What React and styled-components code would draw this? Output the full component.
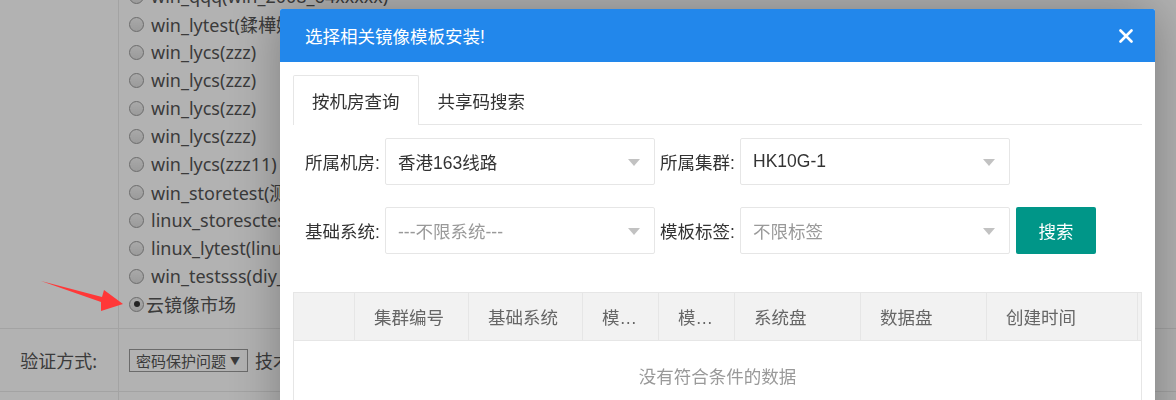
import React from 'react';
import styled, { createGlobalStyle } from 'styled-components';

const GlobalStyle = createGlobalStyle`
  html, body {
    margin: 0;
    padding: 0;
    background: #fff;
    overflow: hidden;
  }
  body {
    font-family: "Noto Sans", "Noto Sans CJK SC", sans-serif;
    color: #555;
  }
`;

/* ---------- page behind the layer ---------- */

const Page = styled.div`
  margin-top: -18px;
`;

const FormRow = styled.div`
  display: flex;
  border-bottom: 1px solid #eaeaea;
  min-height: ${(p) => p.minHeight || 0}px;
`;

const KeyCell = styled.div`
  width: 119px;
  flex-shrink: 0;
  border-right: 1px solid #eaeaea;
  display: flex;
  align-items: center;
  justify-content: flex-end;
  padding-right: 21px;
  box-sizing: border-box;
  font-size: 18px;
  color: #555;
`;

const ValueCell = styled.div`
  flex: 1;
  display: flex;
  align-items: ${(p) => (p.center ? 'center' : 'flex-start')};
  padding-left: 10px;
  white-space: nowrap;
`;

const RadioList = styled.div`
  display: flex;
  flex-direction: column;
  padding-bottom: 10px;
`;

const RadioItem = styled.label`
  display: flex;
  align-items: center;
  height: 28px;
  font-size: 18px;
  color: #555;
  white-space: nowrap;
`;

const RadioDot = styled.span`
  width: 15px;
  height: 15px;
  box-sizing: border-box;
  border-radius: 50%;
  border: 1px solid #9a9a9a;
  background: linear-gradient(#f2f2f2, #dedede);
  margin-right: ${(p) => (p.tight ? 2 : 7)}px;
  display: flex;
  align-items: center;
  justify-content: center;
  flex-shrink: 0;

  &::after {
    content: '';
    width: 6px;
    height: 6px;
    border-radius: 50%;
    background: #333;
    display: ${(p) => (p.checked ? 'block' : 'none')};
  }
`;

const NativeSelect = styled.div`
  width: 119px;
  height: 23px;
  box-sizing: border-box;
  border: 1px solid #9a9a9a;
  background: #fff;
  display: flex;
  align-items: center;
  justify-content: space-between;
  padding: 0 7px 0 6px;
  font-family: "Noto Sans CJK SC", sans-serif;
  font-size: 15px;
  color: #555;
  margin-right: 7px;
`;

const Caret = styled.span`
  font-size: 10px;
  margin-left: 4px;
`;

const Trailing = styled.span`
  font-size: 18px;
  color: #555;
`;

/* ---------- shade and layer ---------- */

const Shade = styled.div`
  position: fixed;
  inset: 0;
  background: rgba(0, 0, 0, 0.3);
  z-index: 10;
`;

const Annotation = styled.svg`
  position: fixed;
  left: 0;
  top: 0;
  z-index: 30;
  pointer-events: none;
`;

const Layer = styled.div`
  position: fixed;
  left: 280px;
  top: 9px;
  width: 875px;
  height: 520px;
  background: #fff;
  border-radius: 2px;
  box-shadow: 1px 1px 50px rgba(0, 0, 0, 0.3);
  z-index: 20;
  font-family: "Liberation Sans", "Noto Sans CJK SC", sans-serif;
  font-size: 17.5px;
  color: #333;
`;

const TitleBar = styled.div`
  height: 53px;
  background: #2287eb;
  border-radius: 2px 2px 0 0;
  display: flex;
  align-items: center;
  justify-content: space-between;
  padding: 0 22px 0 25px;
  color: #fff;
  font-size: 17.5px;
`;

const CloseButton = styled.button`
  border: 0;
  padding: 0;
  background: none;
  width: 14px;
  height: 14px;
  display: flex;
  cursor: pointer;
`;

const Content = styled.div`
  padding: 13px;
`;

const TabBar = styled.div`
  display: flex;
  height: 49px;
  border-bottom: 1px solid #e6e6e6;
`;

const Tab = styled.div`
  height: ${(p) => (p.active ? 50 : 49)}px;
  box-sizing: border-box;
  padding: 0 18px;
  display: flex;
  align-items: center;
  background: #fff;
  border: 1px solid ${(p) => (p.active ? '#e6e6e6' : 'transparent')};
  border-bottom: 0;
  border-radius: 2px 2px 0 0;
  color: #333;
`;

const Form = styled.div`
  padding: 13px 0 0 12px;
  display: flex;
  flex-direction: column;
  gap: 22px;
`;

const Line = styled.div`
  display: flex;
  align-items: center;
  gap: 5px;
`;

const FieldLabel = styled.span`
  width: 75px;
  white-space: nowrap;
  color: #333;
`;

const SelectBox = styled.div`
  width: 270px;
  height: 47px;
  box-sizing: border-box;
  border: 1px solid #e6e6e6;
  border-radius: 2px;
  display: flex;
  align-items: center;
  justify-content: space-between;
  padding: 0 14px 0 12px;
  color: ${(p) => (p.placeholder ? '#999' : '#333')};
  background: #fff;

  &::after {
    content: '';
    border-style: solid;
    border-width: 7px 6.5px 0;
    border-color: #c2c2c2 transparent transparent;
    margin-top: 2px;
  }
`;

const SearchButton = styled.button`
  width: 80px;
  height: 47px;
  margin-left: 1px;
  border: 0;
  border-radius: 2px;
  background: #009688;
  color: #fff;
  font-family: inherit;
  font-size: 17.5px;
  cursor: pointer;
`;

const Table = styled.div`
  margin-top: 38px;
  border: 1px solid #e6e6e6;
`;

const HeadRow = styled.div`
  display: flex;
  height: 47px;
  background: #f2f2f2;
  border-bottom: 1px solid #e6e6e6;
`;

const HeadCell = styled.div`
  width: ${(p) => p.w}px;
  flex-shrink: 0;
  box-sizing: border-box;
  border-right: 1px solid #e6e6e6;
  padding: 0 19px;
  display: flex;
  align-items: center;
  color: #666;

  span {
    overflow: hidden;
    white-space: nowrap;
    text-overflow: ellipsis;
  }
`;

const Empty = styled.div`
  padding: 20px 0;
  line-height: 32px;
  text-align: center;
  color: #999;
`;

const items = [
  'win_qqq(win_2008_64xxxxx)',
  'win_lytest(鍒樺姛娴嬭瘯)',
  'win_lycs(zzz)',
  'win_lycs(zzz)',
  'win_lycs(zzz)',
  'win_lycs(zzz)',
  'win_lycs(zzz11)',
  'win_storetest(测试存储)',
  'linux_storesctest(linux)',
  'linux_lytest(linux_centos)',
  'win_testsss(diy_test)',
];

const columns = [
  { w: 61, t: '' },
  { w: 114, t: '集群编号' },
  { w: 114, t: '基础系统' },
  { w: 76, t: '模板名称' },
  { w: 76, t: '模板标签' },
  { w: 126, t: '系统盘' },
  { w: 126, t: '数据盘' },
  { w: 151, t: '创建时间' },
  { w: 5, t: '' },
];

const App = () => (
  <>
    <GlobalStyle />
    <Page>
      <FormRow>
        <KeyCell />
        <ValueCell>
          <RadioList>
            {items.map((name, i) => (
              <RadioItem key={i}>
                <RadioDot />
                {name}
              </RadioItem>
            ))}
            <RadioItem>
              <RadioDot checked tight />
              云镜像市场
            </RadioItem>
          </RadioList>
        </ValueCell>
      </FormRow>
      <FormRow minHeight={62}>
        <KeyCell>验证方式:</KeyCell>
        <ValueCell center>
          <NativeSelect>
            密码保护问题<Caret>▼</Caret>
          </NativeSelect>
          <Trailing>技术支持邮箱</Trailing>
        </ValueCell>
      </FormRow>
      <FormRow minHeight={62}>
        <KeyCell />
        <ValueCell />
      </FormRow>
    </Page>

    <Shade />

    <Annotation width="140" height="330" viewBox="0 0 140 330">
      <path d="M41 281 L102 297 L104 290 L123 304 L101 311 L101 302 Z" fill="#ff3838" />
    </Annotation>

    <Layer>
      <TitleBar>
        <span>选择相关镜像模板安装!</span>
        <CloseButton aria-label="关闭">
          <svg width="14" height="14" viewBox="0 0 14 14">
            <path d="M1.5 1.5 L12.5 12.5 M12.5 1.5 L1.5 12.5" stroke="#fff" strokeWidth="2.6" strokeLinecap="round" />
          </svg>
        </CloseButton>
      </TitleBar>
      <Content>
        <TabBar>
          <Tab active>按机房查询</Tab>
          <Tab>共享码搜索</Tab>
        </TabBar>
        <Form>
          <Line>
            <FieldLabel>所属机房:</FieldLabel>
            <SelectBox>香港163线路</SelectBox>
            <FieldLabel>所属集群:</FieldLabel>
            <SelectBox>HK10G-1</SelectBox>
          </Line>
          <Line>
            <FieldLabel>基础系统:</FieldLabel>
            <SelectBox placeholder>---不限系统---</SelectBox>
            <FieldLabel>模板标签:</FieldLabel>
            <SelectBox placeholder>不限标签</SelectBox>
            <SearchButton>搜索</SearchButton>
          </Line>
        </Form>
        <Table>
          <HeadRow>
            {columns.map((c, i) => (
              <HeadCell key={i} w={c.w}>
                <span>{c.t}</span>
              </HeadCell>
            ))}
          </HeadRow>
          <Empty>没有符合条件的数据</Empty>
        </Table>
      </Content>
    </Layer>
  </>
);

export default App;
